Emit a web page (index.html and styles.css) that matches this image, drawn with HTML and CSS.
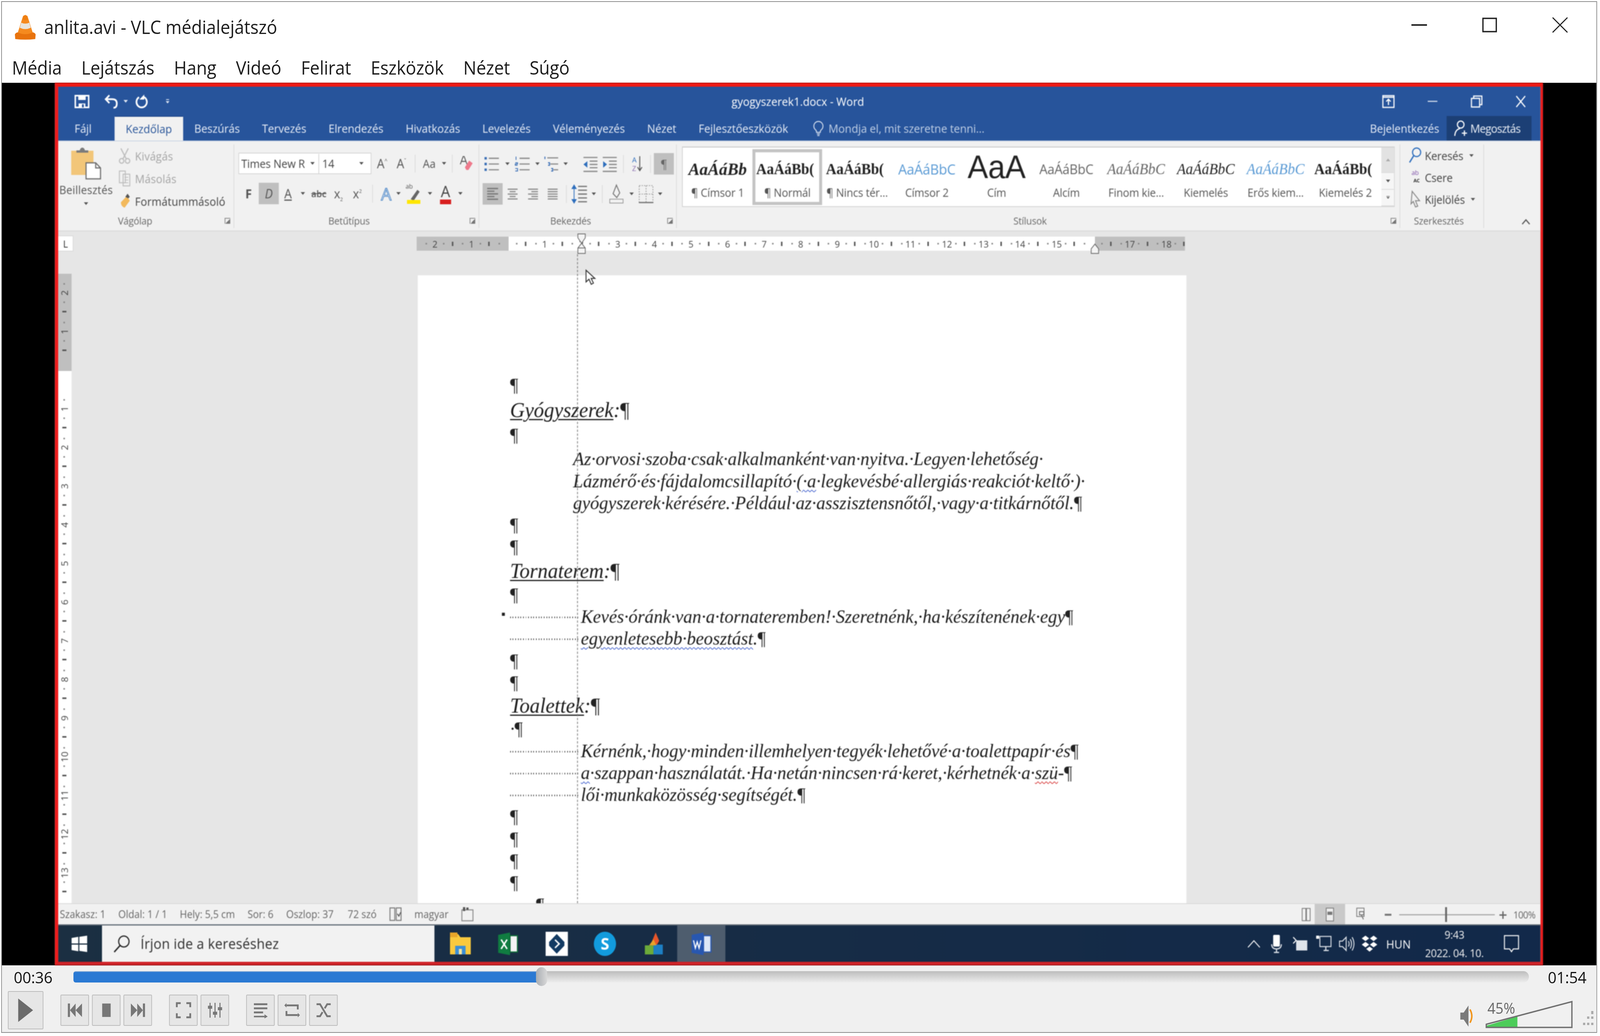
FILE: index.html
```html
<!DOCTYPE html>
<html lang="hu">
<head>
<meta charset="utf-8">
<title>anlita.avi - VLC médialejátszó</title>
<link rel="stylesheet" href="styles.css">
</head>
<body>
<div class="vlc">
  <header class="vtitle">
    <svg class="cone" viewBox="0 0 56 63"><path d="M28 0l6 3 16 48H6L22 3z" fill="#f58a1f"/><path d="M17 20q11 5 22 0l4 13q-15 7-30 0z" fill="#e8e4dc"/><path d="M24 2h8l3 10q-7 3-14 0z" fill="#ee7f12"/><path d="M0 50q3-5 8-5 20 9 40 0 5 0 8 5l-1 12q-27 3-54 0z" fill="#e8730e"/></svg>
    <span class="vname">anlita.avi - VLC médialejátszó</span>
    <div class="vbtns">
      <span class="vbtn"><svg class="i-min" viewBox="0 0 42 4"><rect width="42" height="4" fill="#222"/></svg></span>
      <span class="vbtn"><svg class="i-max" viewBox="0 0 40 38"><rect x="2" y="2" width="36" height="34" fill="none" stroke="#222" stroke-width="3.5"/></svg></span>
      <span class="vbtn"><svg class="i-close" viewBox="0 0 42 40"><path d="M1 1l40 38M41 1L1 39" stroke="#222" stroke-width="3" fill="none"/></svg></span>
    </div>
  </header>
  <nav class="vmenu">
    <span>Média</span><span>Lejátszás</span><span>Hang</span><span>Videó</span><span>Felirat</span><span>Eszközök</span><span>Nézet</span><span>Súgó</span>
  </nav>

  <main class="video">
    <div class="frame">
      <div class="wtitle">
        <div class="qat">
          <svg class="q-save" viewBox="0 0 40 34"><path d="M2 2h36v30H2z" fill="none" stroke="#fff" stroke-width="4"/><path d="M10 2h20v11H10zM11 22h18v10H11z" fill="#fff"/><rect x="20" y="24" width="5" height="8" fill="#27549b"/></svg>
          <svg class="q-undo" viewBox="0 0 38 36"><path d="M14 2L4 12l10 10M4 12h18q12 0 12 11t-9 11" fill="none" stroke="#fff" stroke-width="4.5"/></svg>
          <svg class="caret-w" viewBox="0 0 10 6"><path d="M0 0h10L5 6z" fill="#dfe7f3"/></svg>
          <svg class="q-redo" viewBox="0 0 36 36"><path d="M22 6A14 14 0 1 1 10 7" fill="none" stroke="#fff" stroke-width="4.5"/><path d="M24 0v13H11z" fill="#fff"/></svg>
          <svg class="q-more" viewBox="0 0 10 12"><path d="M1 0h8v2H1zM0 5h10L5 11z" fill="#dfe7f3"/></svg>
        </div>
        <div class="wname">gyogyszerek1.docx - Word</div>
        <div class="wbtns">
          <svg viewBox="0 0 34 34"><rect x="2" y="2" width="30" height="30" fill="none" stroke="#fff" stroke-width="3"/><path d="M2 6h30M17 26V11m-6 6l6-6 6 6" stroke="#fff" stroke-width="3" fill="none"/></svg>
          <svg viewBox="0 0 34 34"><rect x="4" y="15" width="26" height="3" fill="#c8d4e8"/></svg>
          <svg viewBox="0 0 34 34"><path d="M3 9h22v22H3zM9 9V3h22v22h-6" fill="none" stroke="#fff" stroke-width="3"/></svg>
          <svg viewBox="0 0 34 34"><path d="M5 3l24 28M29 3L5 31" stroke="#fff" stroke-width="3" fill="none"/></svg>
        </div>
      </div>

      <div class="wtabs">
        <span class="tab file">Fájl</span>
        <span class="tab active">Kezdőlap</span>
        <span class="tab">Beszúrás</span>
        <span class="tab">Tervezés</span>
        <span class="tab">Elrendezés</span>
        <span class="tab">Hivatkozás</span>
        <span class="tab">Levelezés</span>
        <span class="tab">Véleményezés</span>
        <span class="tab">Nézet</span>
        <span class="tab">Fejlesztőeszközök</span>
        <span class="tell"><svg class="bulb" viewBox="0 0 28 40"><path d="M14 2a12 12 0 0 0-7 22q2 2 2 6h10q0-4 2-6a12 12 0 0 0-7-22zM10 34h8M11 38h6" fill="none" stroke="#d6e0ef" stroke-width="2.5"/></svg>Mondja el, mit szeretne tenni...</span>
        <span class="signin">Bejelentkezés</span>
        <span class="share"><svg class="share-i" viewBox="0 0 40 42"><circle cx="18" cy="11" r="9" fill="none" stroke="#fff" stroke-width="3"/><path d="M2 40q1-16 14-19M28 26v14M21 33h14" fill="none" stroke="#fff" stroke-width="3"/></svg>Megosztás</span>
      </div>

      <div class="ribbon">
        <section class="grp g-clip">
          <div class="gbody clip">
            <div class="paste">
              <svg class="paste-i" viewBox="0 0 80 82"><rect x="0" y="9" width="60" height="62" fill="#f2c679"/><path d="M14 14V8h9q2-7 7-7t7 7h9v6z" fill="#7b7b7b"/><path d="M40 40h26l13 13v28H40z" fill="#fff" stroke="#6d6d6d" stroke-width="3"/><path d="M66 40v13h13" fill="none" stroke="#6d6d6d" stroke-width="3"/></svg>
              <span class="paste-t">Beillesztés</span>
              <svg class="caret" viewBox="0 0 10 6"><path d="M0 0h10L5 6z"/></svg>
            </div>
            <div class="tools">
              <div class="tool dim"><svg class="t-i" viewBox="0 0 32 42"><path d="M6 2l14 26M26 2L12 28" stroke="#bdbdbd" stroke-width="3" fill="none"/><circle cx="8" cy="34" r="6" fill="none" stroke="#bdbdbd" stroke-width="3"/><circle cx="24" cy="34" r="6" fill="none" stroke="#bdbdbd" stroke-width="3"/></svg>Kivágás</div>
              <div class="tool dim"><svg class="t-i" viewBox="0 0 32 42"><path d="M2 2h16v30H2zM12 10h18v30H12z" fill="#f1f1f1" stroke="#bdbdbd" stroke-width="2.5"/><path d="M16 18h10M16 25h10M16 32h10" stroke="#bdbdbd" stroke-width="2"/></svg>Másolás</div>
              <div class="tool"><svg class="t-i" viewBox="0 0 32 42"><path d="M6 24L22 8l8 12-14 18q-10-4-10-14z" fill="#f2b95c"/><path d="M18 10l6-8 6 8-4 4z" fill="#555"/></svg>Formátummásoló</div>
            </div>
          </div>
          <div class="glabel">Vágólap<i class="launch"></i></div>
        </section>

        <section class="grp g-font">
          <div class="gbody rows">
            <div class="r r-font1">
              <div class="fontbox"><span class="fname">Times New R</span><svg class="caret" viewBox="0 0 10 6"><path d="M0 0h10L5 6z"/></svg><span class="fsize">14</span><svg class="caret" viewBox="0 0 10 6"><path d="M0 0h10L5 6z"/></svg></div>
              <span class="gl">A<sup>^</sup></span><span class="gl">A<sup>ˇ</sup></span><i class="sep"></i>
              <span class="gl s">Aa</span><svg class="caret" viewBox="0 0 10 6"><path d="M0 0h10L5 6z"/></svg><i class="sep"></i>
              <svg class="ic" viewBox="0 0 40 44"><path d="M3 24L11 3h3l8 21M6 16h13" fill="none" stroke="#555" stroke-width="2.500"/><path d="M16 32L28 14l10 7-12 18h-6z" fill="#ee7a8c"/></svg>
            </div>
            <div class="r r-font2">
              <b class="gl">F</b><i class="gl on">D</i><u class="gl">A</u><svg class="caret" viewBox="0 0 10 6"><path d="M0 0h10L5 6z"/></svg>
              <s class="gl tiny">abc</s><span class="gl">x<sub>2</sub></span><span class="gl">x<sup class="n">2</sup></span><i class="sep"></i>
              <span class="gl a-out">A</span><svg class="caret" viewBox="0 0 10 6"><path d="M0 0h10L5 6z"/></svg>
              <div class="hilite"><span class="hl-ab">ab</span><svg class="hl-pen" viewBox="0 0 44 38"><path d="M14 26L32 2l6 5-16 23z" fill="#666"/><rect x="4" y="28" width="36" height="10" fill="#ffe600"/></svg></div><svg class="caret" viewBox="0 0 10 6"><path d="M0 0h10L5 6z"/></svg>
              <span class="gl a-red">A</span><svg class="caret" viewBox="0 0 10 6"><path d="M0 0h10L5 6z"/></svg>
            </div>
          </div>
          <div class="glabel">Betűtípus<i class="launch"></i></div>
        </section>

        <section class="grp g-para">
          <div class="gbody rows">
            <div class="r r-para1">
              <svg class="ic" viewBox="0 0 40 40"><path d="M12 6h26M12 20h26M12 34h26" stroke="#8a8a8a" stroke-width="3"/><path d="M1 3h6v6H1zM1 17h6v6H1zM1 31h6v6H1z" fill="#3b6fb6"/></svg><svg class="caret" viewBox="0 0 10 6"><path d="M0 0h10L5 6z"/></svg>
              <svg class="ic" viewBox="0 0 40 40"><path d="M12 6h26M12 20h26M12 34h26" stroke="#8a8a8a" stroke-width="3"/><path d="M3 2v8M1 17h6v3H1v3h6M1 31h6v6H1" stroke="#3b6fb6" stroke-width="2" fill="none"/></svg><svg class="caret" viewBox="0 0 10 6"><path d="M0 0h10L5 6z"/></svg>
              <svg class="ic" viewBox="0 0 40 40"><path d="M8 5h28M16 20h20M24 34h12" stroke="#8a8a8a" stroke-width="3"/><path d="M2 2v6M10 17h4v6h-4M18 31h4v6h-4" stroke="#3b6fb6" stroke-width="2.5" fill="none"/></svg><svg class="caret" viewBox="0 0 10 6"><path d="M0 0h10L5 6z"/></svg>
              <i></i>
              <svg class="ic" viewBox="0 0 40 40"><path d="M2 4h36M18 13h20M18 21h20M18 29h20M2 38h36" stroke="#8a8a8a" stroke-width="3"/><path d="M12 13v16L2 21z" fill="#2f6fbd"/></svg>
              <svg class="ic" viewBox="0 0 40 40"><path d="M2 4h36M18 13h20M18 21h20M18 29h20M2 38h36" stroke="#8a8a8a" stroke-width="3"/><path d="M3 13v16l10-8z" fill="#2f6fbd"/></svg>
              <i class="sep"></i>
              <div class="sort"><span class="sort-t"><span class="s-a">A</span><span class="s-z">Z</span></span><svg class="sort-a" viewBox="0 0 14 44"><path d="M7 2v36M1 30l6 9 6-9" stroke="#555" stroke-width="2.500" fill="none"/></svg></div>
              <i class="sep"></i>
              <span class="gl pil on">¶</span>
            </div>
            <div class="r r-para2">
              <svg class="ic on" viewBox="0 0 54 56"><path d="M12 14h30M12 21h20M12 28h30M12 35h20M12 42h30" stroke="#7a7a7a" stroke-width="3.5"/></svg>
              <svg class="ic" viewBox="0 0 54 56"><path d="M12 14h30M18 21h18M12 28h30M18 35h18M12 42h30" stroke="#8a8a8a" stroke-width="3.5"/></svg>
              <svg class="ic" viewBox="0 0 54 56"><path d="M12 14h30M22 21h20M12 28h30M22 35h20M12 42h30" stroke="#8a8a8a" stroke-width="3.5"/></svg>
              <svg class="ic" viewBox="0 0 54 56"><path d="M12 14h30M12 21h30M12 28h30M12 35h30M12 42h30" stroke="#8a8a8a" stroke-width="3.5"/></svg>
              <i class="sep"></i>
              <svg class="ic" viewBox="0 0 40 46"><path d="M16 5h22M16 14h22M16 23h22M16 32h22M16 41h22" stroke="#7a7a7a" stroke-width="3"/><path d="M6 2l5 8H1zM6 44l5-8H1zM6 8v30" fill="#2f6fbd" stroke="#2f6fbd" stroke-width="2"/></svg><svg class="caret" viewBox="0 0 10 6"><path d="M0 0h10L5 6z"/></svg>
              <i class="sep"></i>
              <svg class="ic" viewBox="0 0 44 50"><path d="M22 2l9 20-8 12-10-10z" fill="none" stroke="#777" stroke-width="2.5"/><rect x="4" y="38" width="36" height="10" fill="#f1f1f1" stroke="#999" stroke-width="2"/></svg><svg class="caret" viewBox="0 0 10 6"><path d="M0 0h10L5 6z"/></svg>
              <svg class="ic" viewBox="0 0 40 46"><path d="M3 3h34v40H3zM20 3v40M3 23h34" fill="none" stroke="#999" stroke-width="2" stroke-dasharray="3 3"/><path d="M2 43h36" stroke="#777" stroke-width="3"/></svg><svg class="caret" viewBox="0 0 10 6"><path d="M0 0h10L5 6z"/></svg>
            </div>
          </div>
          <div class="glabel">Bekezdés<i class="launch"></i></div>
        </section>

        <section class="grp g-styles">
          <div class="gbody">
            <div class="gallery">
              <div class="sty"><span class="smp h1">AaÁáBb</span><span class="lab">¶ Címsor 1</span></div>
              <div class="sty sel"><span class="smp bold">AaÁáBb(</span><span class="lab">¶ Normál</span></div>
              <div class="sty"><span class="smp bold">AaÁáBb(</span><span class="lab">¶ Nincs tér...</span></div>
              <div class="sty"><span class="smp h2">AaÁáBbC</span><span class="lab">Címsor 2</span></div>
              <div class="sty"><span class="smp big">AaA</span><span class="lab">Cím</span></div>
              <div class="sty"><span class="smp sub">AaÁáBbC</span><span class="lab">Alcím</span></div>
              <div class="sty"><span class="smp it grey">AaÁáBbC</span><span class="lab">Finom kie...</span></div>
              <div class="sty"><span class="smp it">AaÁáBbC</span><span class="lab">Kiemelés</span></div>
              <div class="sty"><span class="smp it blue">AaÁáBbC</span><span class="lab">Erős kiem...</span></div>
              <div class="sty"><span class="smp bold">AaÁáBb(</span><span class="lab">Kiemelés 2</span></div>
              <div class="gscroll">
                <span class="sc up"><svg class="caret lite" viewBox="0 0 10 6"><path d="M0 6h10L5 0z"/></svg></span>
                <span class="sc"><svg class="caret" viewBox="0 0 10 6"><path d="M0 0h10L5 6z"/></svg></span>
                <span class="sc"><svg class="caret" viewBox="0 0 10 8"><path d="M0 0h10v1.500H0zM0 3h10L5 8z"/></svg></span>
              </div>
            </div>
          </div>
          <div class="glabel">Stílusok<i class="launch"></i></div>
        </section>

        <section class="grp g-edit">
          <div class="gbody editing">
            <div class="ed"><svg class="ed-i" viewBox="0 0 36 44"><circle cx="22" cy="14" r="11" fill="none" stroke="#2f6fbd" stroke-width="3"/><path d="M14 23L3 40" stroke="#2f6fbd" stroke-width="3.500"/></svg>Keresés<svg class="caret" viewBox="0 0 10 6"><path d="M0 0h10L5 6z"/></svg></div>
            <div class="ed"><div class="ed-i repl"><span class="r-ab">ab</span><span class="r-ac">AC</span></div>Csere</div>
            <div class="ed"><svg class="ed-i" viewBox="0 0 36 44"><path d="M10 2l20 24-11 0 6 14-6 2-6-14-6 6z" fill="none" stroke="#888" stroke-width="2.500"/></svg>Kijelölés<svg class="caret" viewBox="0 0 10 6"><path d="M0 0h10L5 6z"/></svg></div>
          </div>
          <div class="glabel">Szerkesztés</div>
        </section>
        <div class="collapse"><svg viewBox="0 0 24 16"><path d="M2 14L12 3l10 11" fill="none" stroke="#555" stroke-width="3"/></svg></div>
      </div>

      <div class="workspace">
        <div class="vcol">
          <div class="vruler">
            <span>2</span><span>1</span><span></span><span>1</span><span>2</span><span>3</span><span>4</span><span>5</span><span>6</span><span>7</span><span>8</span><span>9</span><span>10</span><span>11</span><span>12</span><span>13</span>
          </div>
          <div class="tabstop">L</div>
        </div>
        <div class="canvas">
          <div class="hruler">
            <span>2</span><span>1</span><span></span><span>1</span><span>2</span><span>3</span><span>4</span><span>5</span><span>6</span><span>7</span><span>8</span><span>9</span><span>10</span><span>11</span><span>12</span><span>13</span><span>14</span><span>15</span><span></span><span>17</span><span>18</span>
          </div>
          <article class="page">
            <div class="doc">
              <p class="ln"><span class="pm">¶</span></p>
              <p class="ln head h-a"><u>Gyógyszerek</u>:<span class="pm">¶</span></p>
              <p class="ln l3"><span class="pm">¶</span></p>
              <p class="ln ind">Az·orvosi·szoba·csak·alkalmanként·van·nyitva.·Legyen·lehetőség·</p>
              <p class="ln ind">Lázmérő·és·fájdalomcsillapító·<span class="wb">(·a</span>·legkevésbé·allergiás·reakciót·keltő·)·</p>
              <p class="ln ind">gyógyszerek·kérésére.·Például·az·asszisztensnőtől,·vagy·a·titkárnőtől.<span class="pm">¶</span></p>
              <p class="ln"><span class="pm">¶</span></p>
              <p class="ln"><span class="pm">¶</span></p>
              <p class="ln head h-b"><u>Tornaterem</u>:<span class="pm">¶</span></p>
              <p class="ln"><span class="pm">¶</span></p>
              <p class="ln tabbed bullet"><i class="lead"></i>Kevés·óránk·van·a·tornateremben!·Szeretnénk,·ha·készítenének·egy<span class="pm">¶</span></p>
              <p class="ln tabbed"><i class="lead"></i><span class="wb">egyenletesebb·beosztást</span>.<span class="pm">¶</span></p>
              <p class="ln"><span class="pm">¶</span></p>
              <p class="ln"><span class="pm">¶</span></p>
              <p class="ln head h-c"><u>Toalettek</u>:<span class="pm">¶</span></p>
              <p class="ln">·<span class="pm">¶</span></p>
              <p class="ln tabbed"><i class="lead"></i>Kérnénk,·hogy·minden·illemhelyen·tegyék·lehetővé·a·toalettpapír·és<span class="pm">¶</span></p>
              <p class="ln tabbed"><i class="lead"></i><span class="wb">a</span>·szappan·használatát.·Ha·netán·nincsen·rá·keret,·kérhetnék·a·<span class="wr">szü</span>-<span class="pm">¶</span></p>
              <p class="ln tabbed"><i class="lead"></i>lői·munkaközösség·segítségét.<span class="pm">¶</span></p>
              <p class="ln"><span class="pm">¶</span></p>
              <p class="ln"><span class="pm">¶</span></p>
              <p class="ln"><span class="pm">¶</span></p>
              <p class="ln"><span class="pm">¶</span></p>
              <p class="ln last"><span class="pm">¶</span></p>
            </div>
          </article>
          <svg class="ind-mark" viewBox="0 0 24 54"><path d="M2 2h20v10L12 26 22 38v14H2V38l10-12L2 12z" fill="#f4f4f4" stroke="#666" stroke-width="2"/><path d="M2 38h20" stroke="#666" stroke-width="2"/></svg>
          <svg class="rind-mark" viewBox="0 0 24 26"><path d="M12 1l10 12v12H2V13z" fill="#f4f4f4" stroke="#666" stroke-width="2"/></svg>
          <i class="guide"></i>
          <svg class="mouse" viewBox="0 0 28 40"><path d="M3 2v30l8-7 6 13 6-3-6-12h10z" fill="#fff" stroke="#333" stroke-width="2.500"/></svg>
        </div>
      </div>

      <footer class="wstatus">
        <span>Szakasz: 1</span><span>Oldal: 1 / 1</span><span>Hely: 5,5 cm</span><span>Sor: 6</span><span class="wide">Oszlop: 37</span><span>72 szó</span>
        <svg class="st-i" viewBox="0 0 34 38"><path d="M2 3h13v32H2zM19 3h13v32H19z" fill="none" stroke="#777" stroke-width="2.500"/><path d="M22 18l4 6 5-10" stroke="#555" stroke-width="2.500" fill="none"/></svg>
        <span>magyar</span>
        <svg class="st-i" viewBox="0 0 34 38"><path d="M2 8h30v28H2z" fill="none" stroke="#888" stroke-width="2.500"/><path d="M5 1h6v10H5zM14 2h6v6h-6z" fill="#555"/></svg>
        <div class="st-right">
          <svg class="vw" viewBox="0 0 30 46"><path d="M2 4h12v38H2zM16 4h12v38H16z" fill="none" stroke="#777" stroke-width="2.500"/></svg>
          <span class="vw-on"><svg class="vw" viewBox="0 0 30 46"><path d="M3 3h24v40H3z" fill="#eee" stroke="#777" stroke-width="2.500"/><path d="M7 14h16v10H7z" fill="#777"/></svg></span>
          <svg class="vw" viewBox="0 0 34 46"><path d="M3 3h24v26H3z" fill="none" stroke="#777" stroke-width="2.500"/><path d="M12 14h14v10H12zM18 24l7 14" stroke="#777" stroke-width="3" fill="none"/></svg>
          <i class="zm-minus"></i>
          <div class="zm"><i></i></div>
          <span class="zm-plus">+</span>
          <span class="zm-pct">100%</span>
        </div>
      </footer>

      <footer class="taskbar">
        <div class="tb-start"><svg viewBox="0 0 42 42"><path d="M0 6l18-3v17H0zM21 3l21-3v20H21zM0 23h18v17L0 37zM21 23h21v19l-21-3z" fill="#fff"/></svg></div>
        <div class="tb-search"><svg class="tb-lens" viewBox="0 0 46 46"><circle cx="29" cy="17" r="14" fill="none" stroke="#222" stroke-width="3"/><path d="M19 27L3 44" stroke="#222" stroke-width="3.500"/></svg>Írjon ide a kereséshez</div>
        <div class="tb-apps">
          <span><svg viewBox="0 0 60 62"><path d="M2 6h22l6 8h28v44H2z" fill="#f9c93e"/><path d="M2 2h20v12H2z" fill="#e8a62a"/><path d="M16 36h28v22H16z" fill="#3a8ed6"/><path d="M26 44h8v14h-8z" fill="#f9e7a0"/></svg></span>
          <span class="app-x"><svg viewBox="0 0 60 62"><path d="M34 2L2 8v46l32 6z" fill="#107c41"/><path d="M34 10h20v42H34z" fill="#f4f4f4" stroke="#0e6b38" stroke-width="3"/><path d="M10 20l16 24M26 20L10 44" stroke="#fff" stroke-width="4"/></svg></span>
          <span><svg viewBox="0 0 64 66"><rect width="64" height="66" fill="#fff"/><path d="M32 6l22 22v10L32 60 10 38V28z" fill="#123a63"/><path d="M27 22l12 11-12 11" fill="none" stroke="#fff" stroke-width="4"/></svg></span>
          <span class="app-s"><b>S</b></span>
          <span><svg viewBox="0 0 62 64"><path d="M24 34L38 2l10 22-10 16z" fill="#e8562a"/><path d="M8 36h24v24H8z" fill="#6cab3a"/><path d="M32 34h26v26H32z" fill="#1d7fc4"/><path d="M20 36l12-16 8 16z" fill="#e8a22a"/></svg></span>
          <span class="cur"><svg viewBox="0 0 60 62"><path d="M36 2L4 8v46l32 6z" fill="#2857b0"/><path d="M36 10h20v42H36z" fill="#dfe8f6" stroke="#2857b0" stroke-width="3"/><path d="M9 22l5 20 5-16 5 16 5-20" fill="none" stroke="#fff" stroke-width="3"/></svg></span>
        </div>
        <div class="tray">
          <svg class="tr-caret" viewBox="0 0 36 22"><path d="M2 20L18 3l16 17" fill="none" stroke="#fff" stroke-width="2.500"/></svg>
          <svg class="tr" viewBox="0 0 30 46"><rect x="6" y="0" width="18" height="30" rx="3" fill="#fff"/><path d="M2 24q0 12 13 12t13-12M15 36v8M8 45h14" fill="none" stroke="#dfe4ea" stroke-width="3"/></svg>
          <svg class="tr" viewBox="0 0 44 46"><rect x="12" y="14" width="30" height="26" fill="#dfe4ea"/><path d="M4 6l8 8-8 8" stroke="#fff" stroke-width="2.500" fill="none"/></svg>
          <svg class="tr" viewBox="0 0 44 46"><path d="M12 4h30v26H12z" fill="none" stroke="#dfe4ea" stroke-width="2.500"/><path d="M22 40h14M28 30v10" stroke="#dfe4ea" stroke-width="3"/><path d="M2 2h8v8H2z" fill="#fff"/></svg>
          <svg class="tr" viewBox="0 0 44 46"><path d="M2 16h8l10-10v34L10 30H2z" fill="none" stroke="#dfe4ea" stroke-width="2.500"/><path d="M26 16q4 7 0 14M31 11q7 12 0 24M36 6q10 17 0 34" fill="none" stroke="#dfe4ea" stroke-width="2.500"/></svg>
          <svg class="tr" viewBox="0 0 44 46"><path d="M11 2l10 7-10 7L1 9zM33 2l10 7-10 7-10-7zM11 18l10 7-10 7-10-7zM33 18l10 7-10 7-10-7zM22 30l9 6-9 7-9-7z" fill="#fff"/></svg>
          <span class="tr-t">HUN</span>
          <div class="clock"><span>9:43</span><span>2022. 04. 10.</span></div>
          <svg class="tr-notif" viewBox="0 0 42 46"><path d="M2 2h38v34H26l-5 7-5-7H2z" fill="none" stroke="#fff" stroke-width="2.500"/></svg>
        </div>
      </footer>
    </div>
  </main>

  <footer class="controls">
    <div class="seekrow">
      <span class="time">00:36</span>
      <div class="seek"><div class="fill"></div><i class="knob"></i></div>
      <span class="time end">01:54</span>
    </div>
    <div class="btnrow">
      <span class="b play"><svg viewBox="0 0 44 64"><path d="M2 2l40 30L2 62z" fill="#6b6b6b"/></svg></span>
      <span class="b first"><svg viewBox="0 0 44 40"><path d="M2 2h6v36H2zM24 2v36L8 20zM42 2v36L24 20z" fill="#777"/></svg></span>
      <span class="b"><svg viewBox="0 0 44 40"><path d="M10 2h24v36H10z" fill="#777"/></svg></span>
      <span class="b"><svg viewBox="0 0 44 40"><path d="M42 2h-6v36h6zM20 2v36l16-18zM2 2v36l18-18z" fill="#777"/></svg></span>
      <span class="b first"><svg viewBox="0 0 44 44"><path d="M14 3H3v11M30 3h11v11M14 41H3V30M30 41h11V30" fill="none" stroke="#777" stroke-width="5"/></svg></span>
      <span class="b"><svg viewBox="0 0 44 44"><path d="M8 2v40M22 2v40M36 2v40" stroke="#777" stroke-width="3"/><path d="M2 10h12v8H2zM16 26h12v8H16zM30 14h12v8H30z" fill="#777"/></svg></span>
      <span class="b first"><svg viewBox="0 0 44 44"><path d="M3 6h38M3 17h38M3 28h26" stroke="#777" stroke-width="5"/><path d="M3 39h30" stroke="#777" stroke-width="4"/><path d="M33 33l9 6-9 5z" fill="#777"/></svg></span>
      <span class="b"><svg viewBox="0 0 44 44"><path d="M38 20V9H6M6 24v11h32" fill="none" stroke="#777" stroke-width="5"/><path d="M6 3l-6 6 6 6zM38 29l6 6-6 6z" fill="#777"/></svg></span>
      <span class="b"><svg viewBox="0 0 44 44"><path d="M2 6h10l20 32h10M2 38h10l7-11M25 17l7-11h10" fill="none" stroke="#777" stroke-width="5"/></svg></span>
      <div class="vol">
        <svg class="spk" viewBox="0 0 40 62"><path d="M2 22h9L24 4v54L11 40H2z" fill="#7a7a7a"/><path d="M28 14q10 17 0 34" fill="none" stroke="#f29418" stroke-width="4"/></svg>
        <div class="volbar">
          <svg viewBox="0 0 235 70"><path d="M86 40L1 64v5h85z" fill="#4dcc5a"/><path d="M2 60L233 2v66H2z" fill="none" stroke="#6f6f6f" stroke-width="3.500"/></svg>
          <span class="volp">45%</span>
        </div>
        <svg class="grip" viewBox="0 0 30 44"><path d="M22 0h6v8h-6zM11 14h6v6h-6zM22 14h6v6h-6zM0 30h6v6H0zM11 30h6v6h-6zM22 30h6v6h-6z" fill="#aaa"/></svg>
      </div>
    </div>
  </footer>
</div>
</body>
</html>
```

FILE: styles.css
```css
* { box-sizing: border-box; }
html, body { margin: 0; padding: 0; background: #fff; overflow: hidden; }
body { width: 100%; height: 2653px; font-family: "Open Sans", "Noto Sans", sans-serif; color: #222; }
svg { display: block; overflow: visible; }
i { font-style: normal; }

.vlc { margin: 3px 0 0 3px; width: 4306px; height: 2642px; border: 2px solid #8d8d8d; display: flex; flex-direction: column; background: #fff; transform-origin: 0 0; }

/* The design is 4317px wide; a browser capped narrower fits it by width. */
@media (max-width: 4316px) {
  .vlc { transform: scaleX(0.94881); }
}

.vtitle { height: 128px; display: flex; align-items: center; padding-left: 35px; }
.cone { width: 56px; height: 63px; }
.vname { margin-left: 23px; font-size: 47px; letter-spacing: -0.1px; color: #1c1c1c; }
.vbtns { margin-left: auto; display: flex; margin-right: 3px; margin-top: -10px; }
.vbtn { width: 190px; height: 60px; display: flex; align-items: center; justify-content: center; }
.i-min { width: 42px; height: 4px; }
.i-max { width: 40px; height: 38px; }
.i-close { width: 42px; height: 40px; }

.vmenu { height: 79px; display: flex; align-items: center; gap: 53px; padding-left: 27px; font-size: 47px; letter-spacing: -0.2px; color: #1c1c1c; }

.video { height: 2260px; background: #000; padding-left: 143px; }
.frame { width: 4015px; height: 2260px; border-style: solid; border-color: #ee1a14 #e81c1c #cf2328 #ee1c1c; border-width: 10px 7px 9px 9px; display: flex; flex-direction: column; background: #f1f1f1; filter: blur(1px); }

.wtitle { height: 75px; background: #27549b; display: grid; grid-template-columns: 1fr auto 1fr; align-items: center; color: #fff; }
.qat { display: flex; align-items: center; padding-left: 44px; }
.q-save { width: 40px; height: 34px; }
.q-undo { width: 38px; height: 36px; margin-left: 40px; }
.caret-w { width: 12px; height: 7px; margin-left: 14px; }
.q-redo { width: 36px; height: 36px; margin-left: 20px; }
.q-more { width: 10px; height: 12px; margin-left: 46px; }
.wname { font-size: 29.5px; color: #fff; padding-right: 8px; }
.wbtns { display: flex; justify-content: flex-end; gap: 85px; padding-right: 36px; }
.wbtns svg { width: 34px; height: 34px; }

.wtabs { height: 63px; background: #27549b; display: flex; align-items: stretch; padding-left: 14px; font-size: 29.5px; letter-spacing: -0.15px; color: #e6ecf6; }
.tab { padding: 0 30px; display: flex; align-items: center; }
.tab.file { margin-right: 32px; }
.tab.active { background: #f1f1f1; color: #2b579a; padding: 0 30px; margin-right: 0; border-top: 2px solid #1d4488; }
.tell { display: flex; align-items: center; margin-left: 38px; color: #c0cfe5; letter-spacing: -0.1px; }
.bulb { width: 28px; height: 40px; margin-right: 13px; }
.signin { margin-left: auto; display: flex; align-items: center; margin-right: 20px; }
.share { width: 229px; margin-right: 24px; background: #1c3f75; display: flex; align-items: center; padding-left: 20px; color: #eef2f8; letter-spacing: -1.2px; }
.share-i { width: 40px; height: 42px; margin-right: 4px; }

.ribbon { height: 233px; background: #f1f1f1; display: flex; border-top: 2px solid #c9d4e4; padding-top: 8px; border-bottom: 3px solid #dcdcdc; font-size: 27px; color: #444; }
.grp { display: flex; flex-direction: column; border-right: 2px solid #dcdcdc; margin-bottom: 6px; }
.g-clip { width: 475px; }
.g-font { width: 661px; }
.g-para { width: 533px; }
.g-styles { width: 1952px; }
.g-edit { width: 226px; }
.gbody { flex: 1; }
.glabel { height: 38px; display: flex; align-items: center; justify-content: center; font-size: 25.5px; color: #6a6a6a; position: relative; letter-spacing: -0.3px; }
.launch { position: absolute; right: 9px; top: 12px; width: 15px; height: 15px; border-top: 2px solid #888; border-left: 2px solid #888; background: linear-gradient(135deg, transparent 50%, #777 50%); }
.g-clip .glabel { justify-content: flex-start; padding-left: 161px; }
.g-font .glabel { padding-right: 40px; }
.g-para .glabel { padding-right: 38px; }
.g-styles .glabel { padding-right: 44px; }
.g-edit .glabel { padding-right: 16px; }

.clip { display: flex; }
.paste { width: 150px; margin-left: 0; margin-right: 4px; display: flex; flex-direction: column; align-items: center; padding-top: 7px; }
.paste-i { width: 80px; height: 82px; }
.paste-t { font-size: 29px; line-height: 36px; margin-top: 9px; letter-spacing: 0.3px; color: #555; }
.paste .caret { margin-top: 14px; }
.caret { width: 12px; height: 7px; fill: #555; }
.caret.lite { fill: #aaa; }
.tools { margin-left: 9px; display: flex; flex-direction: column; }
.tool { height: 58px; display: flex; align-items: center; font-size: 29px; letter-spacing: 0.2px; color: #444; }
.tool.dim { color: #a5a5a5; }
.t-i { width: 32px; height: 42px; margin-right: 12px; }

.rows { display: flex; flex-direction: column; }
.r { display: grid; align-items: center; justify-items: center; }
.g-font .rows { padding: 21px 0 0 11px; }
.g-para .rows { padding: 21px 0 0 9px; }
.r-font1 { grid-template-columns: 362px 52px 52px 21px 56px 24px 20px 56px; height: 55px; }
.r-font2 { grid-template-columns: 55px 54px 50px 30px 56px 50px 52px 30px 44px 22px 60px 28px 56px 24px; height: 55px; margin-top: 22px; }
.r-para1 { grid-template-columns: 50px 33px 50px 30px 47px 28px 28px 49px 55px 20px 54px 18px 54px; height: 57px; }
.r-para2 { grid-template-columns: 54px 54px 55px 51px 24px 48px 28px 18px 58px 23px 55px 22px; height: 55px; margin-top: 21px; }
.r .ic { width: 42px; height: 42px; }
.r-para2 .ic { width: 48px; height: 50px; }
.r-para2 .ic.on { width: 54px; height: 55px; background: #bfbfbf; }
.sep { display: block; width: 2px; height: 46px; background: #dcdcdc; }
.fontbox { width: 359px; height: 55px; justify-self: start; background: #fff; border: 2px solid #d4d4d4; display: grid; grid-template-columns: 192px 22px 110px 24px; align-items: center; font-size: 29px; letter-spacing: -0.2px; color: #444; }
.fname { padding-left: 6px; white-space: nowrap; }
.fsize { padding-left: 8px; border-left: 2px solid #d4d4d4; line-height: 50px; }
.gl { font-size: 32px; font-style: normal; text-decoration: none; color: #555; line-height: 55px; }
.gl.s { font-size: 29px; }
.gl sup { font-size: 14px; vertical-align: 14px; line-height: 0; }
.gl sub { font-size: 13px; line-height: 0; }
.gl sup.n { font-size: 13px; }
b.gl { font-weight: 700; }
i.gl { font-style: italic; }
u.gl { text-decoration: underline; text-underline-offset: 3px; }
s.gl { text-decoration: line-through; }
.gl.tiny { font-size: 24px; font-weight: 600; }
.on { background: #bfbfbf; width: 100%; height: 55px; text-align: center; }
.gl.a-out { font-size: 44px; color: #e6f0fb; -webkit-text-stroke: 2px #5b8fc9; line-height: 50px; }
.gl.a-red { font-size: 40px; line-height: 42px; height: 54px; border-bottom: 12px solid #d81f1f; color: #444; padding: 0 2px; }
.gl.pil { font-family: "Liberation Serif", serif; font-size: 34px; color: #666; }
.hilite { width: 44px; height: 52px; display: flex; flex-direction: column; align-items: flex-start; }
.hl-ab { font-size: 17px; line-height: 14px; color: #555; }
.hl-pen { width: 44px; height: 38px; }
.sort { display: flex; align-items: center; height: 46px; gap: 1px; }
.sort-t { display: flex; flex-direction: column; font-size: 19px; line-height: 22px; }
.s-a { color: #2f6fbd; }
.s-z { color: #8a6fb0; }
.sort-a { width: 14px; height: 44px; }

.gallery { margin: 5px 0 0 14px; width: 1923px; height: 155px; background: #fff; border: 2px solid #d2d2d2; border-top-width: 3px; display: flex; overflow: hidden; }
.sty { width: 188.2px; flex: none; display: flex; flex-direction: column; align-items: center; overflow: hidden; padding-top: 27px; }
.sty.sel { outline: 8px solid #c4c4c4; outline-offset: -8px; margin: 4px 0 3px; padding-top: 23px; }
.smp { height: 56px; line-height: 56px; font-family: "Liberation Serif", serif; font-size: 45px; color: #222; white-space: nowrap; width: 168px; overflow: hidden; text-align: center; }
.smp.h1 { font-weight: 700; font-style: italic; }
.smp.bold { font-weight: 700; font-size: 39px; text-align: left; }
.smp.h2 { font-family: "Open Sans", sans-serif; font-size: 37px; font-weight: 400; color: #5b9bd5; letter-spacing: -0.5px; }
.smp.big { font-family: "Liberation Sans", sans-serif; font-size: 83px; line-height: 46px; overflow: visible; }
.smp.sub { font-family: "Open Sans", sans-serif; font-size: 35px; color: #666; letter-spacing: -0.5px; }
.smp.it { font-style: italic; font-size: 39px; }
.smp.grey { color: #666; }
.smp.blue { color: #5b9bd5; }
.lab { font-size: 29px; color: #555; line-height: 36px; margin-top: 14px; letter-spacing: -0.3px; white-space: nowrap; }
.gscroll { width: 36px; flex: none; margin-left: 3px; display: grid; grid-template-rows: 2fr 1.3fr 1.3fr; background: #f6f6f6; }
.sc { display: flex; align-items: center; justify-content: center; border-bottom: 2px solid #dcdcdc; }
.sc.up { background: #e2e2e2; }

.editing { padding: 0 0 0 22px; }
.ed { height: 56px; display: flex; align-items: center; font-size: 29px; letter-spacing: -0.3px; color: #444; }
.ed-i { width: 36px; height: 44px; margin-right: 8px; }
.ed .caret { margin-left: 16px; }
.repl { display: flex; flex-direction: column; align-items: center; font-size: 17px; line-height: 20px; }
.r-ab { color: #7d4fa8; }
.r-ac { color: #333; font-size: 13px; font-weight: 700; padding-left: 8px; }
.collapse { flex: 1; display: flex; align-items: flex-end; justify-content: flex-end; padding: 0 27px 14px 0; }
.collapse svg { width: 24px; height: 16px; }

.workspace { height: 1720px; flex: none; display: flex; background: #e6e6e6; overflow: hidden; }
.vcol { width: 36px; flex: none; padding-top: 108px; position: relative; }
.vruler { height: 1612px; width: 36px; background: linear-gradient(#bfbfbf 249px, #fff 249px); overflow: hidden; }
.vruler span, .hruler span { display: flex; align-items: center; justify-content: center; font-size: 24px; color: #444; background-repeat: no-repeat; }
.vruler span { height: 99px; writing-mode: vertical-rl; transform: rotate(180deg); background-image: linear-gradient(#555, #555), linear-gradient(#888, #888), linear-gradient(#888, #888); background-size: 11px 4px, 4px 4px, 4px 4px; background-position: 50% 0%, 50% 25%, 50% 75%; }
.tabstop { position: absolute; left: 0; top: 10px; width: 41px; height: 41px; background: #fff; border: 2px solid #dadada; border-left: 0; font-size: 25px; line-height: 38px; text-align: center; color: #333; z-index: 2; }

.canvas { flex: 1; position: relative; padding: 13px 0 0 931px; overflow: hidden; }
.hruler { width: 2073px; height: 36px; display: grid; grid-template-columns: repeat(21, 98.7px); background: linear-gradient(90deg, #bfbfbf 248px, #fff 248px, #fff 1830px, #bfbfbf 1830px); }
.hruler span { background-image: linear-gradient(#555, #555), linear-gradient(#888, #888), linear-gradient(#888, #888); background-size: 4px 11px, 4px 4px, 4px 4px; background-position: 100% 50%, 25% 50%, 75% 50%; }
.page { width: 2074px; height: 1700px; margin: 63px 0 0 3px; background: #fff; overflow: hidden; }
.doc { padding: 253px 0 0 249px; font-family: "Liberation Serif", serif; font-style: italic; font-size: 48.8px; color: #1a1a1a; }
.ln { margin: 0; height: 56.3px; line-height: 56px; white-space: nowrap; position: relative; }
.pm { font-style: normal; color: #222; }
.head { font-size: 55px; }
.head u { text-decoration-thickness: 3px; text-underline-offset: 5px; }
.h-a { height: 72px; line-height: 72px; }
.h-b { height: 66px; line-height: 66px; }
.h-c { height: 62px; line-height: 62px; }
.l3 { height: 61px; }
.ind { padding-left: 170px; }
.lead { display: inline-block; width: 188px; height: 4px; margin-right: 3px; vertical-align: 12px; background: repeating-linear-gradient(90deg, #444 0 2px, transparent 2px 7px); }
.bullet::before { content: ""; position: absolute; left: -22px; top: 18px; width: 8px; height: 8px; background: #222; }
.wb { text-decoration: underline wavy #4a68d0 2px; text-underline-offset: 6px; }
.wr { text-decoration: underline wavy #d84040 2px; text-underline-offset: 6px; }
.last { padding-left: 70px; }

.ind-mark { position: absolute; left: 1364px; top: 4px; width: 24px; height: 54px; }
.rind-mark { position: absolute; left: 2749px; top: 31px; width: 24px; height: 26px; }
.guide { position: absolute; left: 1364px; top: 58px; bottom: 0; width: 0; border-left: 2px dashed #777; }
.mouse { position: absolute; left: 1385px; top: 97px; width: 28px; height: 40px; }

.wstatus { height: 54px; flex: none; background: #f1f1f1; display: flex; align-items: center; gap: 34px; padding-left: 4px; font-size: 26.4px; color: #666; border-top: 2px solid #d8d8d8; }
.wstatus .wide { margin-right: 4px; }
.st-i { width: 34px; height: 38px; }
.st-right { margin-left: auto; display: grid; grid-template-columns: 47px 82px 86px 60px 258px 44px 71px; align-items: center; justify-items: center; padding-right: 8px; height: 100%; }
.vw { width: 30px; height: 38px; }
.vw-on { background: #c9c9c9; width: 82px; height: 54px; display: flex; align-items: center; justify-content: center; }
.zm-minus { width: 18px; height: 5px; background: #777; }
.zm { width: 258px; height: 3px; background: #aaa; position: relative; }
.zm i { position: absolute; left: 124px; top: -18px; width: 5px; height: 38px; background: #666; }
.zm-plus { font-size: 40px; line-height: 40px; color: #666; font-weight: 600; }
.zm-pct { letter-spacing: -1px; font-size: 25px; }

.taskbar { height: 96px; flex: none; display: flex; align-items: stretch; background: linear-gradient(90deg, #1b2f42, #12294a); border-top: 3px solid #5f6a75; }
.tb-start { width: 118px; display: flex; align-items: center; justify-content: center; padding-right: 4px; }
.tb-start svg { width: 42px; height: 42px; }
.tb-search { width: 897px; background: #f2f2f2; display: flex; align-items: center; padding-left: 30px; font-size: 36px; color: #2e2e2e; letter-spacing: 0.4px; }
.tb-lens { width: 46px; height: 46px; margin-right: 28px; }
.tb-apps { margin-left: 5px; display: grid; grid-template-columns: repeat(6, 130px); }
.tb-apps span { display: flex; align-items: center; justify-content: center; }
.tb-apps svg { width: 60px; height: 62px; }
.tb-apps .cur { background: #4e5d6e; }
.tb-apps .app-s b { width: 60px; height: 62px; border-radius: 50%; background: #129bdd; color: #fff; font-size: 42px; line-height: 60px; text-align: center; }
.tray { margin-left: auto; display: grid; grid-template-columns: 62px 60px 66px 62px 63px 60px 96px 206px 102px; align-items: center; justify-items: center; padding-right: 27px; color: #fff; }
.tr-caret { width: 36px; height: 22px; }
.tr { width: 44px; height: 46px; }
.tr-t { font-size: 30px; color: #fff; }
.clock { display: flex; flex-direction: column; align-items: center; font-size: 28px; line-height: 47px; letter-spacing: -0.5px; color: #f2f2f2; }
.tr-notif { width: 42px; height: 46px; }

.controls { flex: 1; background: #f0f0f0; display: flex; flex-direction: column; }
.seekrow { height: 59px; display: flex; align-items: center; padding: 0 11px 0 32px; }
.time { width: 111px; font-size: 41px; color: #111; }
.time.end { width: 120px; margin-left: 51px; }
.seek { position: relative; flex: 1; margin-left: 50px; height: 29px; border-radius: 15px; background: linear-gradient(#bdbdbd, #ededed); }
.fill { width: 1255px; height: 100%; border-radius: 6px 0 0 6px; background: #2a79d3; border-top: 2px solid #7ea6d4; }
.knob { position: absolute; left: 1248px; top: -10px; width: 30px; height: 48px; border-radius: 15px; background: linear-gradient(90deg, #a9adb2, #d8d8d8); }
.btnrow { flex: 1; display: flex; align-items: center; padding-left: 16px; }
.b { width: 77px; height: 80px; margin-left: 8px; background: #e6e6e6; border: 2px solid #bdbdbd; border-radius: 3px; display: flex; align-items: center; justify-content: center; }
.b svg { width: 42px; height: 42px; }
.b.play { width: 96px; height: 98px; margin-left: 0; }
.b.play svg { width: 44px; height: 64px; }
.b.first { margin-left: 46px; }
.vol { margin-left: auto; display: flex; align-items: flex-end; padding-right: 6px; margin-top: 22px; }
.spk { width: 40px; height: 62px; margin-right: 30px; }
.volbar { width: 235px; height: 70px; position: relative; }
.volbar svg { width: 235px; height: 70px; }
.volp { position: absolute; left: 5px; top: -2px; font-size: 38px; color: #666; line-height: 40px; }
.grip { width: 30px; height: 44px; margin-left: 28px; }
```
